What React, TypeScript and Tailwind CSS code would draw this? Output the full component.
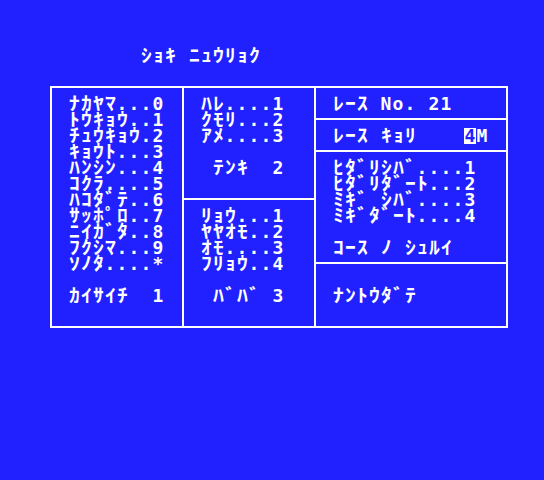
const BG = "bg-[#2121ff]";

const isKana = (ch: string) => ch >= "\uff61" && ch <= "\uff9f";

// one line of text on the 12x16 character grid
const Line = ({ text, inv }: { text: string; inv?: number }) => {
  return (
    <div className="flex h-4 leading-4">
      {Array.from(text).map((ch, i) => (
        <span
          key={i}
          className={`inline-block w-[12px] h-4 text-center overflow-visible ${
            inv === i ? "bg-white text-[#2121ff]" : ""
          }`}
        >
          <span className={`inline-block ${isKana(ch) ? "scale-x-[1.2]" : ""}`}>
            {ch === " " ? "\u00a0" : ch}
          </span>
        </span>
      ))}
    </div>
  );
};

const Blank = () => <div className="h-4" />;

const App = () => {
  return (
    <div
      className={`w-[544px] h-[480px] ${BG} text-white pt-[48px] text-[18px] font-bold`}
      style={{ fontFamily: "'DejaVu Sans Mono', 'Noto Sans CJK JP', monospace" }}
    >
      {/* Title */}
      <div className="pl-[140px]">
        <Line text="ｼｮｷ ﾆｭｳﾘｮｸ" />
      </div>

      {/* Input panel */}
      <div className="ml-[50px] mt-[22px] w-[458px] h-[242px] border-2 border-white flex">
        {/* Venue */}
        <div className="w-[130px] pl-4 pt-2">
          <Line text="ﾅｶﾔﾏ...0" />
          <Line text="ﾄｳｷｮｳ..1" />
          <Line text="ﾁｭｳｷｮｳ.2" />
          <Line text="ｷｮｳﾄ...3" />
          <Line text="ﾊﾝｼﾝ...4" />
          <Line text="ｺｸﾗ....5" />
          <Line text="ﾊｺﾀﾞﾃ..6" />
          <Line text="ｻｯﾎﾟﾛ..7" />
          <Line text="ﾆｲｶﾞﾀ..8" />
          <Line text="ﾌｸｼﾏ...9" />
          <Line text="ｿﾉﾀ....*" />
          <Blank />
          <Line text="ｶｲｻｲﾁ  1" />
        </div>

        {/* Weather / track */}
        <div className="w-[132px] border-l-2 border-white flex flex-col">
          <div className="h-[110px] pl-4 pt-2">
            <Line text="ﾊﾚ....1" />
            <Line text="ｸﾓﾘ...2" />
            <Line text="ｱﾒ....3" />
            <Blank />
            <div className="pl-[12px]">
              <Line text="ﾃﾝｷ  2" />
            </div>
          </div>
          <div className="flex-1 border-t-2 border-white pl-4 pt-2">
            <Line text="ﾘｮｳ...1" />
            <Line text="ﾔﾔｵﾓ..2" />
            <Line text="ｵﾓ....3" />
            <Line text="ﾌﾘｮｳ..4" />
            <Blank />
            <div className="pl-[12px]">
              <Line text="ﾊﾞﾊﾞ 3" />
            </div>
          </div>
        </div>

        {/* Race info */}
        <div className="flex-1 border-l-2 border-white flex flex-col">
          <div className="h-[30px] pl-4 pt-2">
            <Line text="ﾚｰｽ No. 21" />
          </div>
          <div className="h-[32px] border-t-2 border-white pl-4 pt-2">
            <Line text="ﾚｰｽ ｷｮﾘ    4M" inv={11} />
          </div>
          <div className="h-[112px] border-t-2 border-white pl-4 pt-2">
            <Line text="ﾋﾀﾞﾘｼﾊﾞ....1" />
            <Line text="ﾋﾀﾞﾘﾀﾞｰﾄ...2" />
            <Line text="ﾐｷﾞ ｼﾊﾞ....3" />
            <Line text="ﾐｷﾞﾀﾞｰﾄ....4" />
            <Blank />
            <Line text="ｺｰｽ ﾉ ｼｭﾙｲ" />
          </div>
          <div className="flex-1 border-t-2 border-white pl-4 pt-6">
            <Line text="ﾅﾝﾄｳﾀﾞﾃ" />
          </div>
        </div>
      </div>
    </div>
  );
};

export default App;
